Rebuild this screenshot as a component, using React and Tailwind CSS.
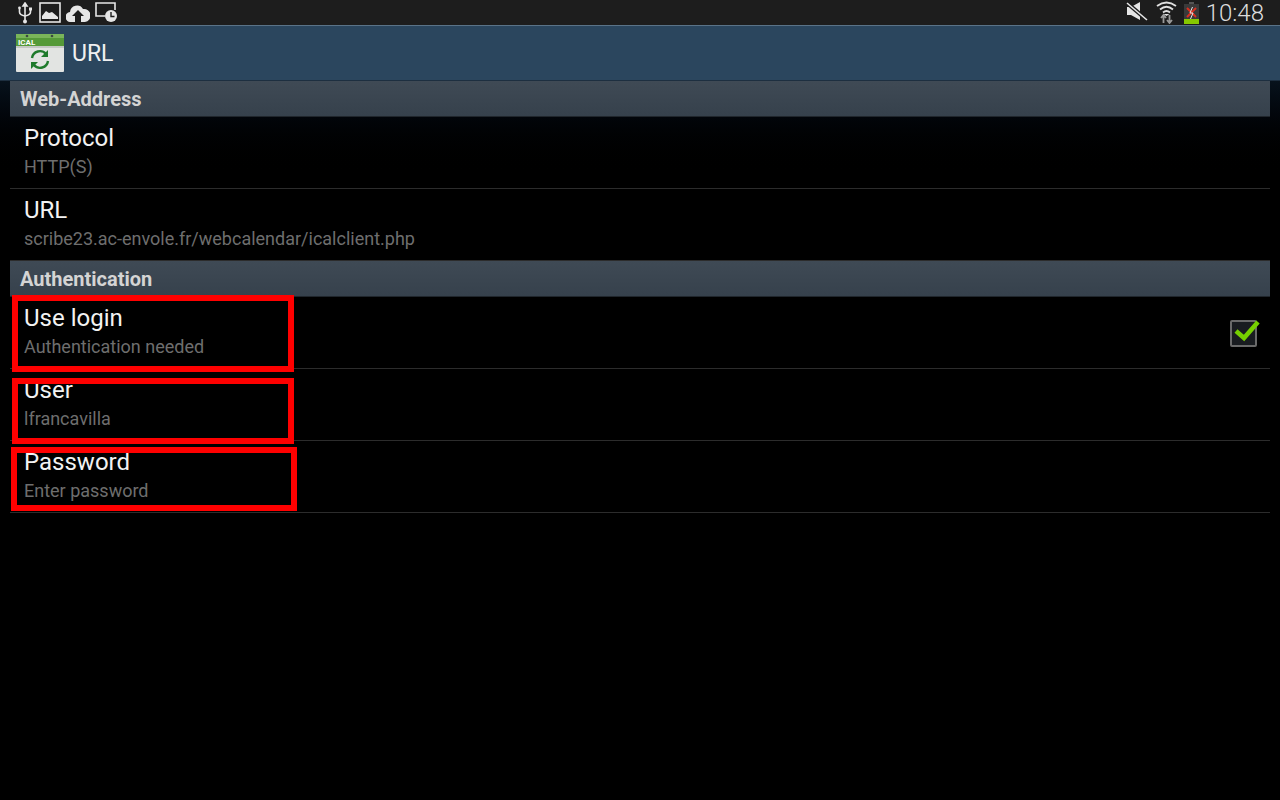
import React from 'react';

const Section = ({ title }) => (
  <div className="h-[36px] pl-[10px] flex items-center bg-gradient-to-b from-[#3f4a55] to-[#36414c] border-b border-[#20262c] text-[20px] font-bold text-[#d4d4d4] leading-none">
    {title}
  </div>
);

const Row = ({ title, summary, right }) => (
  <div className="h-[72px] pl-[14px] pr-[12px] flex items-center justify-between border-b border-[#2c2c2c]">
    <div className="flex flex-col">
      <div className="text-[24px] leading-[28px] text-[#f2f2f2] mt-[-4px]">{title}</div>
      <div className="text-[18px] leading-[22px] text-[#6e6e6e] mt-[4px]">{summary}</div>
    </div>
    {right}
  </div>
);

const CheckBox = () => (
  <div className="relative w-[27px] h-[27px] mr-[1px] mt-[2px] border-[2px] border-[#6a6a6a] bg-[#191c20] rounded-[2px]">
    <svg className="absolute left-[1px] top-[-6px]" width="28" height="26" viewBox="0 0 28 26">
      <path d="M3 15 L11 22 L25 6" fill="none" stroke="#76d000" strokeWidth="4.5" />
    </svg>
  </div>
);

const StatusLeft = () => (
  <div className="flex items-center gap-[6px] pl-[17px] text-[#e6e6e6]">
    {/* usb */}
    <svg width="16" height="22" viewBox="0 0 16 22" fill="none" stroke="#e6e6e6" strokeWidth="1.6">
      <path d="M8 2 V19" />
      <path d="M8 1 L10 4 H6 Z" fill="#e6e6e6" />
      <path d="M2.5 7 V10 Q2.5 13 8 14 Q13.5 13 13.5 10 V8" />
      <circle cx="2.5" cy="6" r="1.4" fill="#e6e6e6" stroke="none" />
      <rect x="12" y="5.5" width="3" height="3" fill="#e6e6e6" stroke="none" />
      <circle cx="8" cy="19.5" r="2" fill="#e6e6e6" stroke="none" />
    </svg>
    {/* picture */}
    <svg width="22" height="21" viewBox="0 0 22 21" fill="none">
      <rect x="1" y="1" width="20" height="19" stroke="#e6e6e6" strokeWidth="1.6" />
      <path d="M3 17 V14 L7 9 L10 11 L13 10 L19 15 V17 Z" fill="#e6e6e6" />
    </svg>
    {/* upload cloud */}
    <svg width="24" height="18" viewBox="0 0 24 18" className="ml-[-1px]">
      <path d="M5 18 A5 5 0 0 1 4 8 A7 7 0 0 1 17 5 A6.5 6.5 0 0 1 19 18 H15 V12 H18 L12 6 L6 12 H9 V18 Z" fill="#e6e6e6" />
    </svg>
    {/* screen with clock */}
    <svg width="23" height="21" viewBox="0 0 23 21" fill="none" className="ml-[-1px]">
      <path d="M10 14 H1 V1 H20 V8" stroke="#e6e6e6" strokeWidth="1.6" />
      <circle cx="16" cy="14" r="6" fill="#e6e6e6" />
      <path d="M16 10 V14.5 H19.5" stroke="#1d1d1d" strokeWidth="1.4" />
    </svg>
  </div>
);

const StatusRight = () => (
  <div className="flex items-center pr-[16px]">
    {/* muted speaker */}
    <svg width="22" height="19" viewBox="0 0 22 19" className="mt-[-2px]">
      <path d="M1 6 H6 L15 1 V6.5 L7 1 Z" fill="none" />
      <path d="M1 5 H5 L14 0 V18 L5 13 H1 Z" fill="#e6e6e6" />
      <path d="M0 0 L21 18" stroke="#1d1d1d" strokeWidth="4" />
      <path d="M1 1 L21 18" stroke="#e6e6e6" strokeWidth="1.6" />
    </svg>
    {/* wifi */}
    <svg width="22" height="23" viewBox="0 0 22 23" fill="none" className="ml-[8px]" stroke="#e0e0e0">
      <path d="M1 5 Q10.5 -2 20 5" strokeWidth="1.8" />
      <path d="M4 8.5 Q10.5 3 17 8.5" strokeWidth="1.8" />
      <path d="M7 11.5 Q10.5 8.5 14 11.5" strokeWidth="1.8" />
      <path d="M7.5 13 L10.5 15 L13.5 13" fill="#e0e0e0" strokeWidth="0" />
      <path d="M7.5 14 V22 M5 17 L7.5 14 L10 17" stroke="#9a9a9a" strokeWidth="1.8" />
      <path d="M13.5 14 V22 M11 19 L13.5 22 L16 19" stroke="#9a9a9a" strokeWidth="1.8" />
    </svg>
    {/* battery */}
    <svg width="15" height="22" viewBox="0 0 15 22" className="ml-[6px]">
      <rect x="5" y="0" width="5" height="2" fill="#555555" />
      <rect x="0" y="2" width="15" height="20" fill="#3a3a3a" />
      <rect x="0" y="17" width="15" height="5" fill="#86c800" />
      <path d="M3 6 L12 15 M12 6 L3 15" stroke="#d83020" strokeWidth="2" />
      <path d="M8.5 5 L6 11 H9 L6.5 17" stroke="#e6e6e6" strokeWidth="1" fill="none" />
    </svg>
    <div className="ml-[7px] text-[24px] leading-none text-[#dcdcdc] font-light">10:48</div>
  </div>
);

const IcalIcon = () => (
  <svg width="48" height="38" viewBox="0 0 48 38">
    <rect x="0" y="0" width="48" height="38" rx="1" fill="#e2e4e2" />
    <path d="M0 1 Q0 0 1 0 H47 Q48 0 48 1 V12 H0 Z" fill="#559a38" />
    <rect x="0" y="0" width="48" height="4" fill="#7ab55a" />
    <rect x="0" y="12" width="48" height="2" fill="#c4c8c4" />
    <circle cx="11" cy="2" r="1.3" fill="#3b4a40" />
    <circle cx="36" cy="2" r="1.3" fill="#3b4a40" />
    <text x="2" y="10.5" fontSize="8" fontWeight="700" fontFamily="Roboto, sans-serif" fill="#ffffff">ICAL</text>
    <path d="M16 24 A8 8 0 0 1 30 20" fill="none" stroke="#1f7a2c" strokeWidth="2.4" />
    <path d="M32 16 V23 H25 Z" fill="#1f7a2c" />
    <path d="M32 27 A8 8 0 0 1 18 31" fill="none" stroke="#1f7a2c" strokeWidth="2.4" />
    <path d="M15 35 V28 H22 Z" fill="#1f7a2c" />
  </svg>
);

export default function App() {
  return (
    <div className="relative w-[1280px] h-[800px] overflow-hidden bg-black font-['Roboto',sans-serif]">
      <div className="h-[25px] bg-[#1d1d1d] flex items-center justify-between">
        <StatusLeft />
        <StatusRight />
      </div>
      <div className="h-[56px] bg-[#2b465e] border-t border-[#5a7388] border-b-[#1d2f40] border-b flex items-center pl-[16px]">
        <IcalIcon />
        <div className="ml-[8px] text-[23px] leading-none text-[#f0f0f0]">URL</div>
      </div>
      <div className="bg-gradient-to-b from-[#07121c] to-black to-[100px]">
        <div className="px-[10px]">
          <Section title="Web-Address" />
          <Row title="Protocol" summary="HTTP(S)" />
          <Row title="URL" summary="scribe23.ac-envole.fr/webcalendar/icalclient.php" />
          <Section title="Authentication" />
          <Row title="Use login" summary="Authentication needed" right={<CheckBox />} />
          <Row title="User" summary="lfrancavilla" />
          <Row title="Password" summary="Enter password" />
        </div>
      </div>

      {/* red annotation boxes drawn over the screenshot */}
      <div className="absolute left-[12px] top-[295px] w-[282px] h-[77px] border-[6px] border-[#ff0000]" />
      <div className="absolute left-[12px] top-[378px] w-[282px] h-[66px] border-[6px] border-[#ff0000]" />
      <div className="absolute left-[11px] top-[447px] w-[286px] h-[64px] border-[6px] border-[#ff0000]" />
    </div>
  );
}
